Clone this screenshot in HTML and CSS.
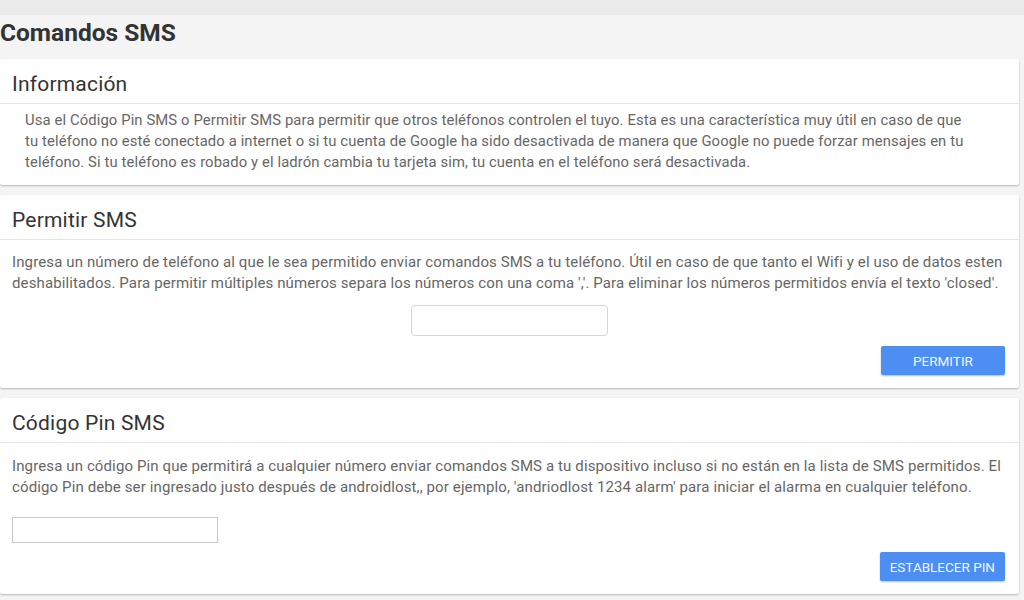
FILE: index.html
```html
<!DOCTYPE html>
<html lang="es">

<head>
    <meta charset="UTF-8">
    <meta name="viewport" content="width=device-width, initial-scale=1.0">
    <title>Comandos SMS</title>

    <link rel="stylesheet" href="styles.css">

</head>

<body>

    <div class="topbar"></div>

    <div class="page">
        <h1 class="page-title">Comandos SMS</h1>

        <div class="card">
            <h2 class="card-title">Información</h2>
            <div class="card-body info-body">
                <p class="info-text">Usa el Código Pin SMS o Permitir SMS para permitir que otros teléfonos controlen el tuyo. Esta es una característica muy útil en caso de que<br>tu teléfono no esté conectado a internet o si tu cuenta de Google ha sido desactivada de manera que Google no puede forzar mensajes en tu teléfono. Si tu teléfono es robado y el ladrón cambia tu tarjeta sim, tu cuenta en el teléfono será desactivada.</p>
            </div>
        </div>

        <div class="card">
            <h2 class="card-title">Permitir SMS</h2>
            <div class="card-body">
                <p>Ingresa un número de teléfono al que le sea permitido enviar comandos SMS a tu teléfono. Útil en caso de que tanto el Wifi y el uso de datos esten deshabilitados. Para permitir múltiples números separa los números con una coma ','. Para eliminar los números permitidos envía el texto 'closed'.</p>
                <div class="field-center">
                    <input type="text" class="phone-input" id="allowNumber">
                </div>
                <div class="actions">
                    <button class="btn" onclick="allowSms()">Permitir</button>
                </div>
            </div>
        </div>

        <div class="card">
            <h2 class="card-title">Código Pin SMS</h2>
            <div class="card-body pin-body">
                <p>Ingresa un código Pin que permitirá a cualquier número enviar comandos SMS a tu dispositivo incluso si no están en la lista de SMS permitidos. El código Pin debe ser ingresado justo después de androidlost,, por ejemplo, 'andriodlost 1234 alarm' para iniciar el alarma en cualquier teléfono.</p>
                <input type="text" class="pin-input" id="smsPin">
                <div class="actions">
                    <button class="btn" onclick="setPin()">Establecer Pin</button>
                </div>
            </div>
        </div>
    </div>

    <script>
        function allowSms() {
            const value = document.getElementById('allowNumber').value;
            console.log('allow', value);
        }

        function setPin() {
            const value = document.getElementById('smsPin').value;
            console.log('pin', value);
        }
    </script>

</body>
</html>
```

FILE: styles.css
```css
body {
    font-family: Roboto, "Liberation Sans", sans-serif;
    background-color: #f4f4f4;
    margin: 0;
    padding: 0;
}

.topbar {
    height: 15px;
    background-color: #ebebeb;
}

.page {
    padding-right: 5px;
}

.page-title {
    margin: 0;
    height: 44px;
    line-height: 36px;
    font-size: 24.5px;
    font-weight: bold;
    color: #333;
}

.card {
    background-color: #fff;
    margin-bottom: 10px;
    box-shadow: 0 1px 2px rgba(0, 0, 0, 0.25);
    border-radius: 2px;
}

.card-title {
    margin: 0;
    padding: 13px 12px 7px;
    line-height: 24px;
    font-size: 21px;
    letter-spacing: 0.2px;
    font-weight: normal;
    color: #333;
    border-bottom: 1px solid #e6e6e6;
}

.card-body {
    padding: 12px 12px 13px;
    font-size: 15px;
    letter-spacing: 0.12px;
    line-height: 21px;
    color: #666;
}

.card-body p {
    margin: 0;
}

.info-body {
    padding-top: 6px;
    padding-bottom: 12px;
}

.info-text {
    padding: 0 13px;
    font-size: 14.8px;
    letter-spacing: 0.12px;
}

.pin-body {
    padding-top: 13px;
}

.field-center {
    display: flex;
    justify-content: center;
    margin-top: 11px;
}

.phone-input {
    width: 197px;
    height: 31px;
    box-sizing: border-box;
    border: 1px solid #d6d6d6;
    border-radius: 4px;
}

.pin-input {
    display: block;
    margin-top: 19px;
    width: 206px;
    height: 26px;
    box-sizing: border-box;
    border: 1px solid #c8c8c8;
    border-radius: 0;
}

.actions {
    display: flex;
    justify-content: flex-end;
    margin-top: 10px;
    padding-right: 2px;
}

.pin-input + .actions {
    margin-top: 9px;
}

.btn {
    min-width: 124px;
    height: 29px;
    padding: 0 10px;
    background-color: #4d8ef3;
    color: #f4f8ff;
    border: none;
    border-radius: 2px;
    box-shadow: 0 1px 2px rgba(0, 0, 0, 0.25);
    font-family: Roboto, "Liberation Sans", sans-serif;
    font-size: 13.5px;
    text-transform: uppercase;
    cursor: pointer;
}

    .btn:hover {
        background-color: #3b7de6;
    }
```
